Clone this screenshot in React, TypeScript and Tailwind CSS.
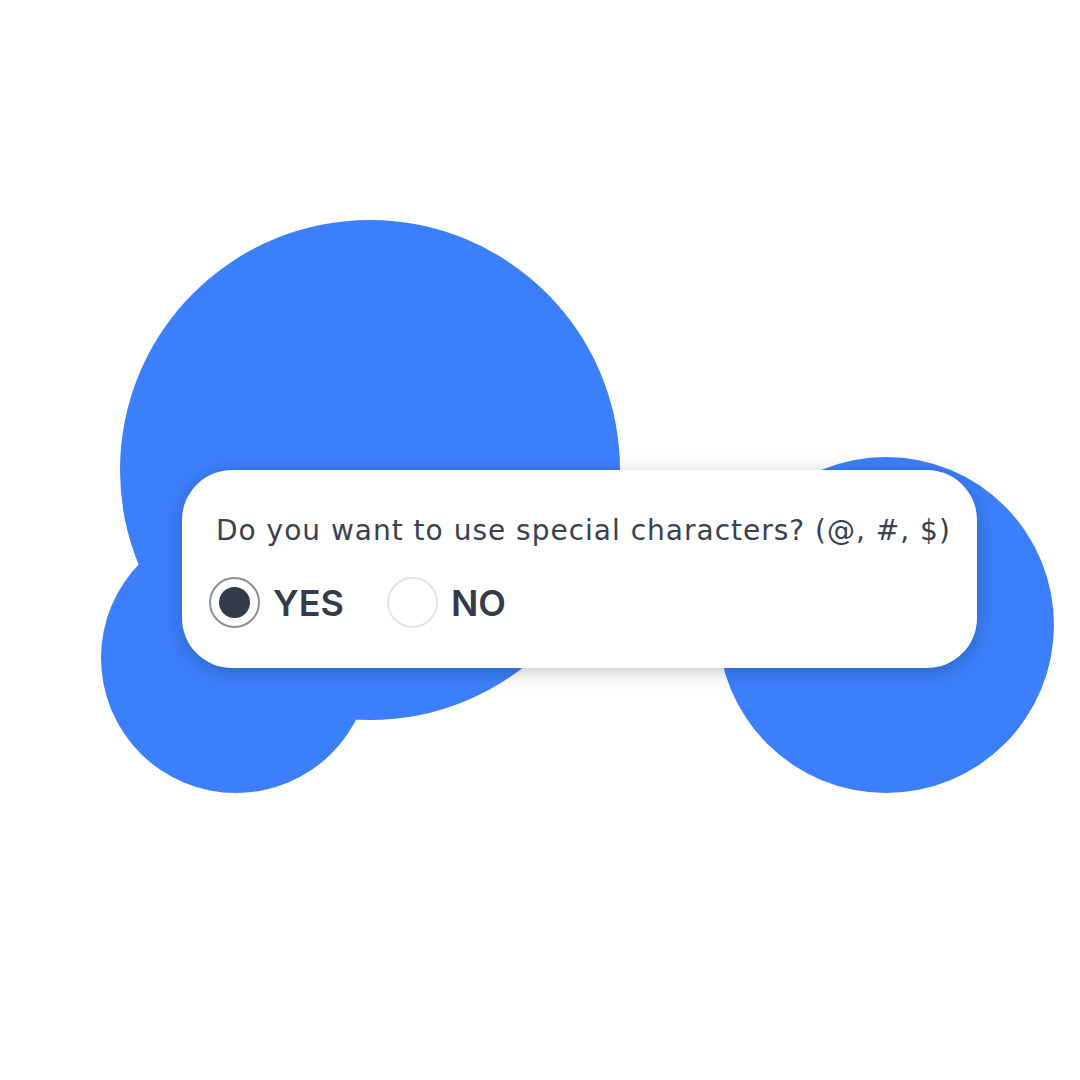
import React, { useState } from 'react';

const options = ['YES', 'NO'];

const App = () => {
  const [choice, setChoice] = useState('YES');

  return (
    <div className="relative w-[1080px] h-[1080px] overflow-hidden bg-white pt-[470px] pl-[182px] font-['Inter',sans-serif]">
      {/* Background blobs */}
      <div className="absolute left-[120px] top-[220px] w-[500px] h-[500px] rounded-full bg-[#3b7ffa]" />
      <div className="absolute left-[101px] top-[523px] w-[270px] h-[270px] rounded-full bg-[#3b7ffa]" />
      <div className="absolute left-[718px] top-[457px] w-[336px] h-[336px] rounded-full bg-[#3b7ffa]" />

      {/* Question card */}
      <div className="relative z-10 flex h-[198px] w-[795px] flex-col rounded-[50px] bg-white pl-[27px] pt-[43px] shadow-[0_4px_20px_rgba(0,0,0,0.22)]">
        <p className="pl-[7px] font-['DejaVu_Sans',sans-serif] text-[28px] leading-[35px] tracking-[1px] text-[#374151]">
          Do you want to use special characters? (@, #, $)
        </p>
        <div className="mt-[29px] flex items-center gap-[43px]">
          {options.map(opt => {
            const selected = choice === opt;
            return (
              <button
                key={opt}
                onClick={() => setChoice(opt)}
                className="flex items-center gap-[13px]"
              >
                <span
                  className={
                    selected
                      ? 'flex h-[51px] w-[51px] items-center justify-center rounded-full border-2 border-[#8b8f97] bg-white'
                      : 'flex h-[51px] w-[51px] items-center justify-center rounded-full border-2 border-[#e3e4e6] bg-white'
                  }
                >
                  {selected && <span className="h-[31px] w-[31px] rounded-full bg-[#343b4a]" />}
                </span>
                <span className="text-[36px] font-semibold leading-none text-[#343b4a]">{opt}</span>
              </button>
            );
          })}
        </div>
      </div>
    </div>
  );
};

export default App;
